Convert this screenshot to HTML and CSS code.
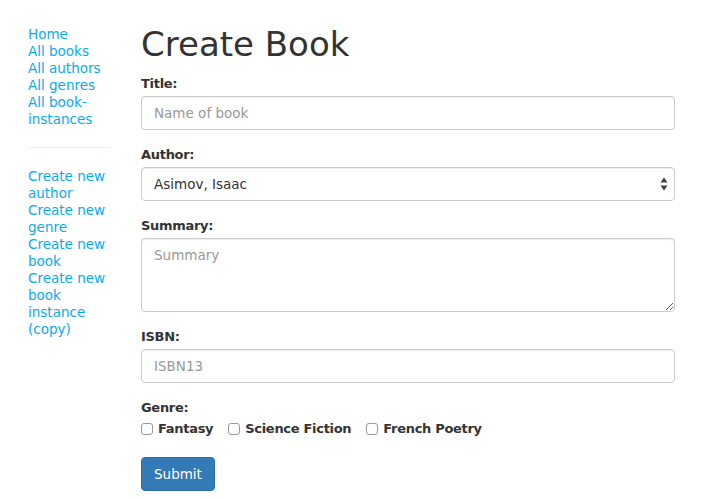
FILE: index.html
```html
<!DOCTYPE html>
<html lang="en">
<head>
<meta charset="utf-8">
<title>Create Book</title>
<link rel="stylesheet" href="styles.css">
</head>
<body>
<div class="page">
  <nav class="sidebar">
    <ul class="nav-list">
      <li><a href="#">Home</a></li>
      <li><a href="#">All books</a></li>
      <li><a href="#">All authors</a></li>
      <li><a href="#">All genres</a></li>
      <li><a href="#">All book-instances</a></li>
    </ul>
    <hr class="divider">
    <ul class="nav-list nav-list-second">
      <li><a href="#">Create new author</a></li>
      <li><a href="#">Create new genre</a></li>
      <li><a href="#">Create new book</a></li>
      <li><a href="#">Create new book instance (copy)</a></li>
    </ul>
  </nav>
  <main class="content">
    <h1 class="title">Create Book</h1>
    <form class="book-form">
      <div class="form-group">
        <label class="field-label" for="title">Title:</label>
        <input class="form-control" id="title" type="text" placeholder="Name of book">
      </div>
      <div class="form-group">
        <label class="field-label" for="author">Author:</label>
        <div class="select-wrap">
          <select class="form-control select-control" id="author">
            <option>Asimov, Isaac</option>
          </select>
          <svg class="select-arrows" width="8" height="14" viewBox="0 0 8 14" aria-hidden="true">
            <path d="M4 0.5 L7.5 5.5 L0.5 5.5 Z" fill="#444"/>
            <path d="M4 13.5 L7.5 8.5 L0.5 8.5 Z" fill="#444"/>
          </svg>
        </div>
      </div>
      <div class="form-group">
        <label class="field-label" for="summary">Summary:</label>
        <textarea class="form-control textarea-control" id="summary" placeholder="Summary"></textarea>
      </div>
      <div class="form-group">
        <label class="field-label" for="isbn">ISBN:</label>
        <input class="form-control" id="isbn" type="text" placeholder="ISBN13">
      </div>
      <div class="form-group genre-group">
        <label class="field-label">Genre:</label>
        <div class="check-row">
          <div class="check-item"><input class="check" type="checkbox" id="g1"><label class="check-label" for="g1">Fantasy</label></div>
          <div class="check-item"><input class="check" type="checkbox" id="g2"><label class="check-label" for="g2">Science Fiction</label></div>
          <div class="check-item"><input class="check" type="checkbox" id="g3"><label class="check-label" for="g3">French Poetry</label></div>
        </div>
      </div>
      <button class="btn-submit" type="submit">Submit</button>
    </form>
  </main>
</div>
</body>
</html>
```

FILE: styles.css
```css
html, body {
  margin: 0;
  padding: 0;
  background: #fff;
}

body {
  font-family: "DejaVu Sans", Verdana, sans-serif;
  font-size: 13.5px;
  line-height: 17px;
  color: #333;
}

.page {
  display: grid;
  grid-template-columns: 83px 534px;
  column-gap: 30px;
  padding-left: 28px;
}

.nav-list {
  list-style: none;
  margin: 26px 0 0;
  padding: 0;
}

.nav-list-second {
  margin-top: 0;
}

.nav-list a {
  color: #0aabee;
  text-decoration: none;
}

.divider {
  margin: 19px 0 20px;
  border: 0;
  border-top: 1px solid #eee;
  height: 0;
}

.title {
  margin: 24px 0 10px;
  font-size: 34px;
  line-height: 40px;
  font-weight: normal;
  color: #333;
}

.form-group {
  margin-bottom: 15px;
}

.field-label {
  display: block;
  font-weight: bold;
  font-size: 13px;
  letter-spacing: -0.3px;
  padding-top: 1px;
  margin-bottom: 4px;
}

.form-control {
  display: block;
  box-sizing: border-box;
  width: 100%;
  height: 34px;
  margin: 0;
  padding: 6px 12px;
  font-family: inherit;
  font-size: 13.5px;
  line-height: 20px;
  color: #555;
  background: #fff;
  border: 1px solid #ccc;
  border-radius: 4px;
  box-shadow: inset 0 1px 1px rgba(0, 0, 0, 0.075);
}

.form-control::placeholder {
  color: #999;
}

.select-wrap {
  position: relative;
}

.select-control {
  -webkit-appearance: none;
  appearance: none;
  color: #333;
}

.select-arrows {
  position: absolute;
  right: 7px;
  top: 10px;
}

.textarea-control {
  height: 74px;
  resize: vertical;
}

.genre-group {
  margin-bottom: 20px;
}

.check-row {
  display: flex;
  align-items: center;
  column-gap: 15px;
  padding-top: 1px;
  margin-top: -1px;
}

.check-item {
  display: flex;
  align-items: center;
  column-gap: 5px;
}

.check {
  -webkit-appearance: none;
  appearance: none;
  width: 12px;
  height: 12px;
  margin: 0;
  border: 1px solid #999;
  border-radius: 3px;
  background: #fff;
}

.check-label {
  font-weight: bold;
  font-size: 13px;
  letter-spacing: -0.3px;
}

.btn-submit {
  display: block;
  box-sizing: border-box;
  height: 34px;
  padding: 6px 12px;
  font-family: inherit;
  font-size: 13.5px;
  line-height: 20px;
  color: #fff;
  background: #337ab7;
  border: 1px solid #2e6da4;
  border-radius: 4px;
}
```
